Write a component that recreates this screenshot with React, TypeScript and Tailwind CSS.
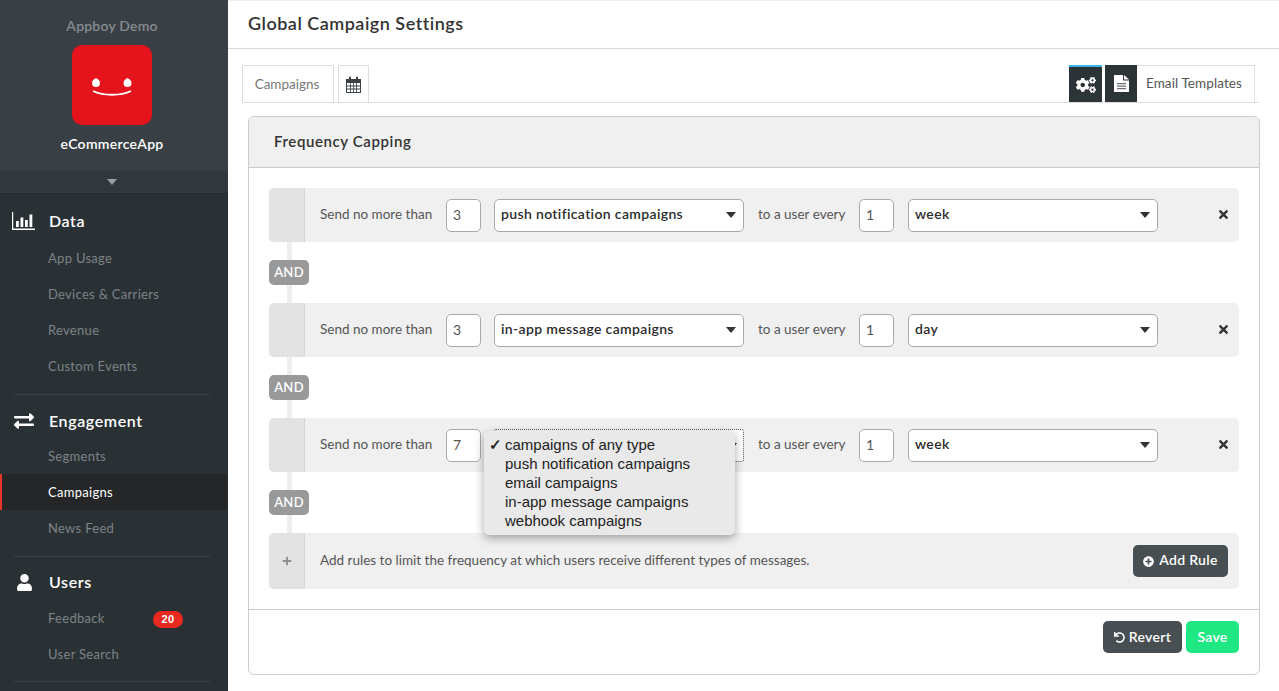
import type { ReactNode } from "react";
import { FaCogs, FaTimes, FaPlus, FaPlusCircle, FaUndo, FaUser, FaExchangeAlt } from "react-icons/fa";

const font = "font-['Lato','Open_Sans',sans-serif]";

function BarsIcon() {
  return (
    <svg width="24" height="18" viewBox="0 0 24 18" fill="white">
      <path d="M0 0h1.2v16.4H23V18H0z" />
      <rect x="4" y="9" width="2.8" height="6" />
      <rect x="8.5" y="5.5" width="2.8" height="9.5" />
      <rect x="13" y="8" width="2.8" height="7" />
      <rect x="17.5" y="2.5" width="2.8" height="12.5" />
    </svg>
  );
}

function Smile() {
  return (
    <svg className="mt-[5px]" width="40" height="20" viewBox="0 0 40 20" fill="white">
      <path d="M4 0c2.500 1 4 3 4 5a4 4 0 0 1-8 0c0-2 1.500-4 4-5z" />
      <path d="M35.500 0c2.500 1 4 3 4 5a4 4 0 0 1-8 0c0-2 1.500-4 4-5z" />
      <path d="M1 13c10 5 28 5 38 0" fill="none" stroke="white" strokeWidth="1.800" />
    </svg>
  );
}

function CalendarIcon() {
  return (
    <svg width="15" height="17" viewBox="0 0 15 17" fill="#3a4145">
      <path d="M0 3h15v14H0zM1 7v9h13V7z" fillRule="evenodd" />
      <rect x="3" y="0.500" width="2" height="4.500" rx="1" />
      <rect x="10" y="0.500" width="2" height="4.500" rx="1" />
      <path d="M4.200 7h.8v9h-.8zM7.100 7h.8v9h-.8zM10 7h.8v9H10zM1 9.600h13v.8H1zM1 12.600h13v.8H1z" />
    </svg>
  );
}

function DocIcon() {
  return (
    <svg width="15" height="17" viewBox="0 0 15 17">
      <path d="M0 0h9v5.500h6V17H0z" fill="white" />
      <path d="M10 0l5 4.500h-5z" fill="white" />
      <path d="M3 8h9v1.200H3zM3 10.500h9v1.200H3zM3 13h9v1.200H3z" fill="#6b7073" />
    </svg>
  );
}

function NavHead({ icon, label }: { icon: ReactNode; label: string }) {
  return (
    <div className="flex items-center h-[26px]">
      <div className="w-[49px] pl-[12px] flex items-center">{icon}</div>
      <span className="text-white text-[16px] font-semibold tracking-[0.6px]">{label}</span>
    </div>
  );
}

function NavItem({ label, active, badge }: { label: string; active?: boolean; badge?: string }) {
  return (
    <div
      className={`flex items-center h-9 pl-12 pt-[2px] text-[13px] tracking-[0.3px] ${
        active ? "bg-[#242628] text-white border-l-2 border-[#e8352e] pl-[46px] w-[227px]" : "text-[#7d8387]"
      }`}
    >
      <span className="w-[105px] whitespace-nowrap">{label}</span>
      {badge && (
        <span className="w-[30px] h-[17px] rounded-full bg-[#e8291f] text-white text-[11px] font-bold flex items-center justify-center font-['Liberation_Sans',sans-serif]">
          {badge}
        </span>
      )}
    </div>
  );
}

function Sidebar() {
  return (
    <aside className="w-[228px] h-[691px] shrink-0 bg-[#2a3135] overflow-hidden">
      <div className="h-[171px] w-[224px] bg-[#383f45] flex flex-col items-center pt-[17px] shadow-[4px_0_0_#383f45]">
        <div className="text-[#868b8f] text-[14px] font-semibold leading-[18px] tracking-[0.2px]">Appboy Demo</div>
        <div className="mt-[10px] w-20 h-20 rounded-[10px] bg-[#e5131b] flex items-center justify-center">
          <Smile />
        </div>
        <div className="mt-[10px] text-white text-[14px] font-semibold leading-[18px] tracking-[0.3px]">eCommerceApp</div>
      </div>
      <div className="h-[23px] bg-[#32393e] border-b border-[#262c30] flex items-center justify-center pr-1">
        <div className="w-0 h-0 border-x-[5.5px] border-x-transparent border-t-[6px] border-t-[#9a9ea1]" />
      </div>
      <div className="pt-[14px]">
        <NavHead icon={<BarsIcon />} label="Data" />
        <div className="mt-[6px]">
          <NavItem label="App Usage" />
          <NavItem label="Devices & Carriers" />
          <NavItem label="Revenue" />
          <NavItem label="Custom Events" />
        </div>
        <div className="mx-[14px] mt-[10px] border-t border-[#3a4145] w-[196px]" />
        <div className="mt-[13px]">
          <NavHead icon={<FaExchangeAlt className="text-white text-[20px] ml-[2px]" />} label="Engagement" />
        </div>
        <div className="mt-[4px]">
          <NavItem label="Segments" />
          <NavItem label="Campaigns" active />
          <NavItem label="News Feed" />
        </div>
        <div className="mx-[14px] mt-[10px] border-t border-[#3a4145] w-[196px]" />
        <div className="mt-[12px]">
          <NavHead icon={<FaUser className="text-white text-[17px] ml-[4px]" />} label="Users" />
        </div>
        <div className="mt-[5px]">
          <NavItem label="Feedback" badge="20" />
          <NavItem label="User Search" />
        </div>
        <div className="mx-[14px] mt-[9px] border-t border-[#3a4145] w-[196px]" />
      </div>
    </aside>
  );
}

function NumberBox({ value }: { value: string }) {
  return (
    <div className="w-[35px] h-[33px] rounded-[5px] border border-[#a9a9a9] bg-white flex items-center pl-[6px] pb-[2px] text-[14px] text-[#555]">
      {value}
    </div>
  );
}

function SelectBox({ value }: { value: string }) {
  return (
    <div className="w-[250px] h-[33px] rounded-[5px] border border-[#a9a9a9] bg-white flex items-center justify-between pl-[6px] pr-[7px] text-[14px] font-semibold tracking-[0.35px] text-[#2b2b2b]">
      <span className="pb-[3px]">{value}</span>
      <div className="w-0 h-0 border-x-[5.5px] border-x-transparent border-t-[6px] border-t-[#333]" />
    </div>
  );
}

function Rule({ count, kind, period, open }: { count: string; kind: string; period: string; open?: boolean }) {
  return (
    <div className="h-[54px] rounded-[5px] bg-[#f0f0f0] flex items-center overflow-visible text-[13.5px] text-[#555]">
      <div className="w-9 h-full rounded-l-[5px] bg-[#e3e3e3] border-r border-[#d6d6d6] shrink-0" />
      <span className="ml-[15px] w-[126px] whitespace-nowrap pb-[2px]">Send no more than</span>
      <NumberBox value={count} />
      <div className="ml-[13px] relative">
        {open ? (
          <>
            <div className="w-[250px] h-[33px] rounded-[2px] border border-dotted border-[#555] bg-white flex items-center justify-end pr-[6px]">
              <div className="w-0 h-0 border-x-[3px] border-x-transparent border-t-[4px] border-t-[#333]" />
            </div>
            <div className="absolute left-[-10px] top-[2px] w-[251px] h-[104px] rounded-[5px] bg-[#e9e9e9] shadow-[0_3px_10px_rgba(0,0,0,0.35)] z-10 pt-[4px] font-['Liberation_Sans',sans-serif] text-[15px] leading-[19px] text-[#222]">
              {["campaigns of any type", "push notification campaigns", "email campaigns", "in-app message campaigns", "webhook campaigns"].map((o, i) => (
                <div key={o} className="relative pl-[21px]">
                  {i === 0 && <span className="absolute left-[5px] top-0 text-[15px] font-bold">✓</span>}
                  {o}
                </div>
              ))}
            </div>
          </>
        ) : (
          <SelectBox value={kind} />
        )}
      </div>
      <span className="ml-[14px] w-[101px] whitespace-nowrap pb-[2px]">to a user every</span>
      <NumberBox value="1" />
      <div className="ml-[14px]">
        <SelectBox value={period} />
      </div>
      <FaTimes className="ml-[59px] mb-[2px] text-[#333] text-[13px]" />
    </div>
  );
}

function AndGap() {
  return (
    <div className="flex flex-col items-start">
      <div className="ml-[18px] w-[5px] h-[18px] bg-[#eeeeee]" />
      <div className="w-10 h-[25px] rounded-[5px] bg-[#999] text-white text-[13px] font-semibold tracking-[0.3px] flex items-center justify-center">AND</div>
      <div className="ml-[18px] w-[5px] h-[18px] bg-[#eeeeee]" />
    </div>
  );
}

export default function App() {
  return (
    <div className={`flex w-[1279px] h-[691px] overflow-hidden bg-white ${font}`}>
      <Sidebar />
      <main className="flex-1 min-w-0">
        <header className="h-[49px] border-y border-t-[#efefef] border-b-[#d9d9d9] pl-5 pb-[2px] flex items-center">
          <h1 className="text-[18px] font-semibold tracking-[0.5px] text-[#333]">Global Campaign Settings</h1>
        </header>
        <div className="ml-[14px] mr-5 mt-4 h-[38px] border-b border-[#dedede] flex items-stretch justify-between">
          <div className="flex gap-1 h-[38px]">
            <div className="w-[92px] border border-b-0 border-[#dedede] flex items-center justify-center pr-[2px] text-[13.5px] text-[#777]">Campaigns</div>
            <div className="w-[31px] border border-b-0 border-[#dedede] flex items-center justify-center">
              <CalendarIcon />
            </div>
          </div>
          <div className="flex mr-[4px] h-[37px]">
            <div className="w-[33px] bg-[#2d3438] border-t-2 border-[#38b5ee] flex items-center justify-center">
              <FaCogs className="text-white text-[20px]" />
            </div>
            <div className="ml-[3px] w-[32px] bg-[#2d3438] flex items-center justify-center">
              <DocIcon />
            </div>
            <div className="w-[118px] border-y border-r border-b-0 border-[#dedede] flex items-center justify-center pb-[2px] pr-[3px] text-[13.5px] tracking-[0.1px] text-[#555]">Email Templates</div>
          </div>
        </div>
        <section className="ml-5 mt-[13px] w-[1012px] h-[559px] border border-[#cccccc] rounded-[6px] overflow-hidden flex flex-col">
          <div className="h-[51px] shrink-0 bg-[#f0f0f0] border-b border-[#cccccc] pl-[25px] pb-[2px] flex items-center text-[15px] font-semibold tracking-[0.6px] text-[#333]">
            Frequency Capping
          </div>
          <div className="pl-5 pr-5 pt-5">
            <Rule count="3" kind="push notification campaigns" period="week" />
            <AndGap />
            <Rule count="3" kind="in-app message campaigns" period="day" />
            <AndGap />
            <Rule count="7" kind="campaigns of any type" period="week" open />
            <AndGap />
            <div className="h-14 rounded-[5px] bg-[#f0f0f0] flex items-center text-[13.5px] text-[#555]">
              <div className="w-9 h-full rounded-l-[5px] bg-[#e3e3e3] border-r border-[#d6d6d6] flex items-center justify-center shrink-0">
                <FaPlus className="text-[#8f8f8f] text-[10px]" />
              </div>
              <span className="ml-[15px] flex-1 pb-[2px]">Add rules to limit the frequency at which users receive different types of messages.</span>
              <button className="mr-[11px] w-[95px] h-8 rounded-[5px] bg-[#474f52] text-white text-[14px] font-semibold tracking-[0.3px] flex items-center justify-center gap-[5px]">
                <FaPlusCircle className="text-[11px]" />
                <span className="pb-[3px]">Add Rule</span>
              </button>
            </div>
          </div>
          <div className="mt-5 border-t border-[#cccccc] pt-[11px] pr-5 flex justify-end gap-1">
            <button className="w-[79px] h-8 rounded-[5px] bg-[#474f52] text-white text-[14px] font-semibold tracking-[0.3px] flex items-center justify-center gap-[4px]">
              <FaUndo className="text-[11px]" />
              <span className="pb-[2px]">Revert</span>
            </button>
            <button className="w-[53px] h-8 rounded-[5px] bg-[#1fe883] text-white text-[14px] font-semibold tracking-[0.3px] pb-[2px]">Save</button>
          </div>
        </section>
      </main>
    </div>
  );
}
